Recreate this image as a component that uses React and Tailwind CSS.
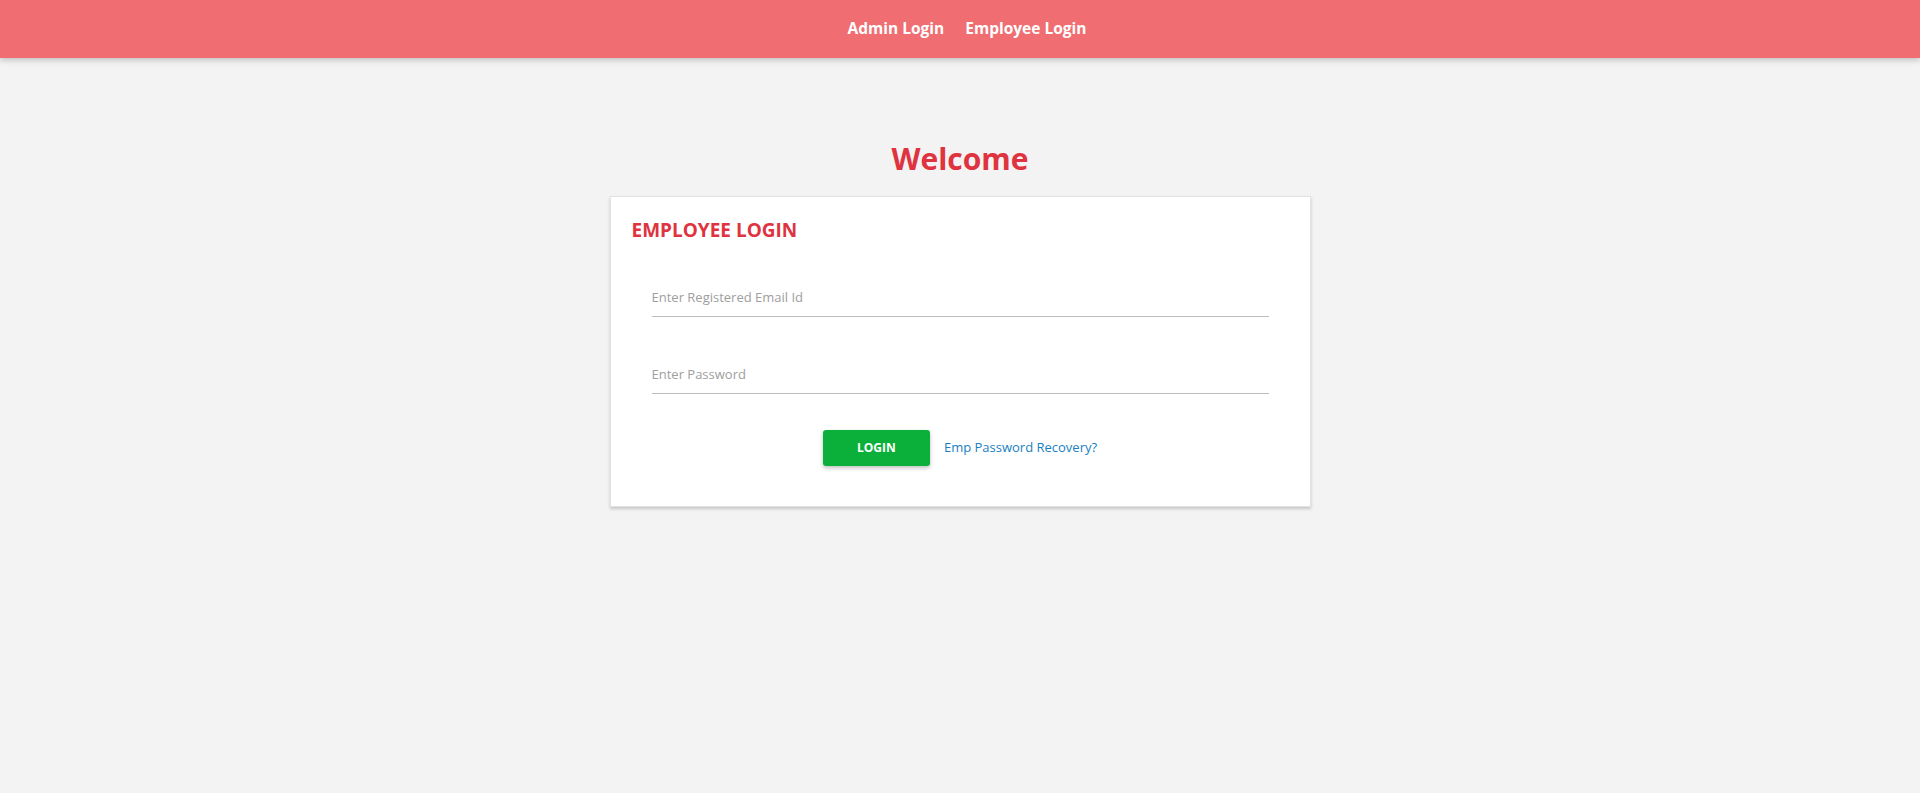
import { useState } from "react";

export default function App() {
  const [email, setEmail] = useState("");
  const [password, setPassword] = useState("");

  return (
    <div className="min-h-screen bg-[#f3f3f3] font-['Open_Sans',sans-serif]">
      <header className="h-[58px] bg-[#f06d72] shadow-[0_2px_6px_rgba(0,0,0,0.22)] flex items-center justify-center gap-[21px] pl-[14px]">
        <a href="#" className="text-white font-bold text-[15.5px]">Admin Login</a>
        <a href="#" className="text-white font-bold text-[15.5px]">Employee Login</a>
      </header>

      <main className="flex flex-col items-center pt-[81px]">
        <h1 className="text-[30px] leading-[40px] font-bold text-[#e03340]">Welcome</h1>

        <div className="mt-[17px] w-[701px] bg-white border border-[#e2e2e2] shadow-[0_2px_3px_rgba(0,0,0,0.18)] pt-[19px] pb-[40px]">
          <h2 className="px-[21px] text-[19px] leading-[28px] font-bold text-[#e03340]">EMPLOYEE LOGIN</h2>

          <form onSubmit={(e) => e.preventDefault()} className="px-[41px] pt-[33px]">
            <input
              type="email"
              placeholder="Enter Registered Email Id"
              value={email}
              onChange={(e) => setEmail(e.target.value)}
              className="w-full h-[40px] border-b border-[#bdbdbd] text-[13px] text-gray-700 placeholder:text-[#9e9e9e] outline-none"
            />
            <input
              type="password"
              placeholder="Enter Password"
              value={password}
              onChange={(e) => setPassword(e.target.value)}
              className="mt-[37px] w-full h-[40px] border-b border-[#bdbdbd] text-[13px] text-gray-700 placeholder:text-[#9e9e9e] outline-none"
            />

            <div className="mt-[36px] flex items-center justify-center gap-[14px]">
              <button
                type="submit"
                className="w-[107px] h-[36px] rounded-[3px] bg-[#0bb03a] text-white text-[12px] font-bold shadow-[0_2px_4px_rgba(0,0,0,0.25)]"
              >
                LOGIN
              </button>
              <a href="#" className="text-[13px] text-[#1a7fc1]">Emp Password Recovery?</a>
            </div>
          </form>
        </div>
      </main>
    </div>
  );
}
